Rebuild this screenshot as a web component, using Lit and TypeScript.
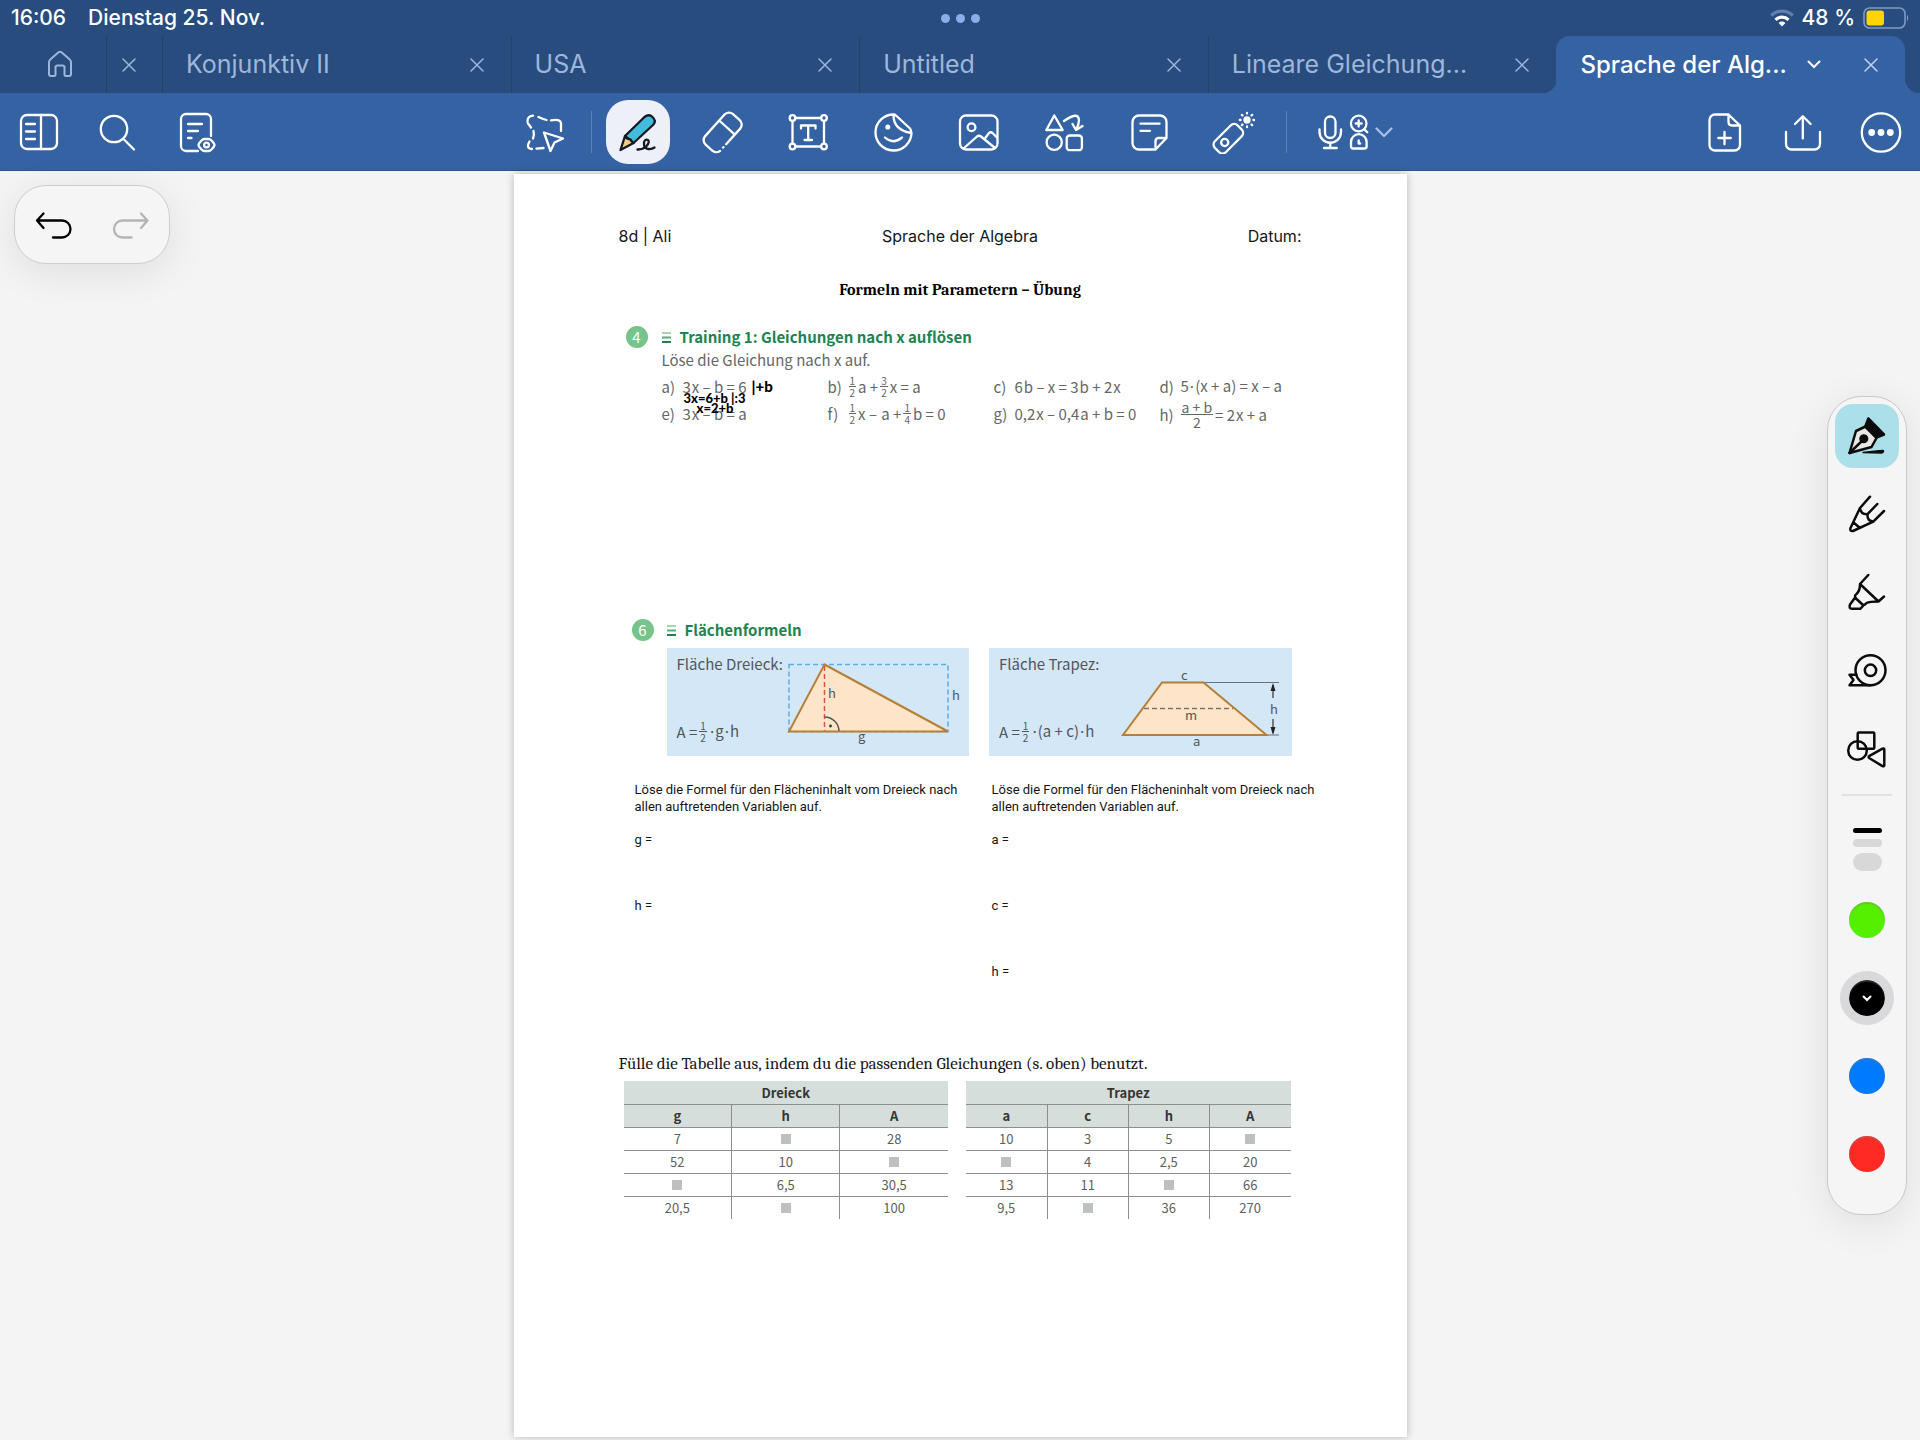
import { LitElement, html, css, svg, nothing } from "lit";
import { customElement, property } from "lit/decorators.js";
import { classMap } from "lit/directives/class-map.js";

const icons: Record<string, unknown> = {
  panel: svg`<rect x="4" y="5" width="36" height="34" rx="6"/><path d="M24 5v34M9 14h9M9 21.5h9M9 29h9"/>`,
  search: svg`<circle cx="19" cy="19" r="13.2"/><path d="M28.5 29 39 39.5"/>`,
  outline: svg`<path d="M25 41H13a5 5 0 0 1-5-5V9a5 5 0 0 1 5-5h20a5 5 0 0 1 5 5v17M15 14h14M15 21h10M15 28h3.5"/><path d="M28.5 30.500q1.500-1.500 3-1.500h4q1.500 0 3 1.500l2.500 3q1 1.500 0 3l-2.500 3q-1.500 1.500-3 1.500h-4q-1.500 0-3-1.500l-2.500-3q-1-1.500 0-3z"/><circle cx="33.500" cy="35" r="2.400"/>`,
  lasso: svg`<path d="M4.500 12Q4 6 10 5.600M15.500 7q4 2 8 3M28 10.300Q37 8.500 38 13v8M5 13.500l3 4M10.500 21q1 4-.5 7.500M6.500 31.500Q2.500 38.500 9 39M13.500 38.600l7-.6"/><path d="M21 22.500 40 28.500 31.500 32.500 27.500 41z"/>`,
  pen: svg`<g stroke="#15181d"><path d="M9 26 28.500 7q4.500-3.500 8 0 4 3.500 1 7.500L17.500 33z" fill="#42bcdc"/><path d="M9 26 4.500 40 17.500 33q-2-1-3-3.500Q10 29 9 26z" fill="#efcb8c"/><path fill="none" d="M21.500 39.500q5 .3 9-3.500 3.500-4 1.500-6-3-1.500-4 2.500-.5 6 4.500 6.500 3.500.3 6-1.500"/></g>`,
  eraser: svg`<g transform="rotate(-48 22 22)"><path d="M15 32.500H36a6 6 0 0 0 6-6V17.500a6 6 0 0 0-6-6H7a6 6 0 0 0-6 6V26.500a6 6 0 0 0 5 6M10.500 32.500h.5M28 11.500v21"/></g>`,
  text: svg`<circle cx="6.500" cy="8" r="2.800"/><circle cx="38" cy="8" r="2.800"/><circle cx="6.500" cy="36.500" r="2.800"/><circle cx="38" cy="36.500" r="2.800"/><path d="M9.500 8H35M9.500 36.500H35M6.500 11v22.500M38 11v22.500M22.200 15.500v14.500M18.500 30h7.500M15 18.500v-3h14.500v3"/>`,
  sticker: svg`<path d="M23 4.500A18 18 0 1 0 40.500 23q-1-4-1.500-4.500L25.500 6Q24 4.700 23 4.500zM22.500 4.500Q22 20 40.500 23M14 27.500q8 7.500 17 0"/><circle cx="16.800" cy="17" r="1.400" fill="currentColor"/>`,
  image: svg`<rect x="4" y="5.500" width="37.500" height="34" rx="6"/><circle cx="15.500" cy="17.300" r="3.900"/><path d="M7.500 38.500 21 26.500q2-1.500 4 0L39 38M28.500 29l4.500-6q1.500-1.500 3.500 0l4.500 4.500"/>`,
  elements: svg`<path d="M13.300 5.500 5.300 20h16.400z"/><circle cx="13.200" cy="32.300" r="7.600"/><rect x="25.700" y="25.500" width="15.200" height="14.700" rx="3"/><path d="M23 11Q37 1 38 10q0 4-2.500 9M31.500 14l3.500 6 6.500-4"/>`,
  note: svg`<path d="M29.500 39.500H13a6.500 6.500 0 0 1-6.500-6.500V12A6.500 6.500 0 0 1 13 5.500h21a6.500 6.500 0 0 1 6.500 6.500v16zM29.500 39.500V31a3 3 0 0 1 3-3h8M14.500 13.700h19M14.500 20.800h9.500"/>`,
  laser: svg`<rect x="1.300" y="21" width="32" height="15.500" rx="5" transform="rotate(-45 17.300 28.700)"/><circle cx="13.700" cy="32.500" r="3.600"/><circle cx="36" cy="10" r="2.500" fill="currentColor"/><path d="M36 2.800v.8M36 16.400v.8M28.800 10h.8M42.400 10h.8M30.900 4.900l.6.6M40.500 14.500l.6.600M30.900 15.100l.6-.6M40.500 5.500l.6-.6"/>`,
  addPage: svg`<path d="M25.500 4.500H12a5.500 5.500 0 0 0-5.500 5.500v25a5.500 5.500 0 0 0 5.500 5.500h19.500A5.500 5.500 0 0 0 37 35V15.500zM25.500 4.500V12q0 3.500 3.500 3.500h8M21.500 21.800v12.500M15.300 28h12.500"/>`,
  share: svg`<path d="M5 22v12a5.500 5.500 0 0 0 5.500 5.500h23A5.500 5.500 0 0 0 39 34V22M21.800 28.500V6.500M14 14l7.800-7.800L29.600 14"/>`,
  more: svg`<circle cx="22" cy="22.500" r="19.200"/><g fill="currentColor" stroke="none"><circle cx="12.700" cy="22.500" r="3.400"/><circle cx="22" cy="22.500" r="3.400"/><circle cx="31.300" cy="22.500" r="3.400"/></g>`,
  undo: svg`<path d="M11.500 10.500 5 17.500l6.500 7.500M5.500 17.500H30a8 8 0 0 1 0 17h-9"/>`,
  redo: svg`<path d="M32 10.500l6.500 7-6.500 7.500M38 17.500H13.500a8 8 0 0 0 0 17h9"/>`,
  nib: svg`<path d="M4.500 39 11 17l9.500-4.500L31.500 24l-5 9z" fill="#eae7e6"/><path d="M23.300 4.500 39 20.500l-7.500 3L20.300 12.500z" fill="currentColor"/><circle cx="18.800" cy="24.700" r="3.300" fill="currentColor"/><path d="M4.500 39 18 26"/><path d="M18 38.500l18.500-2q2-.5 2 1-.2 1.500-2 1.500z" fill="currentColor" stroke-width="1.500"/>`,
  pencil: svg`<path d="M25 4.700 15 16 5.500 36q-1 3.500 2.500 3L28.300 29.700 39 19M15 16q.5 6.500 7.500 6.200-.5 7.200 6 7.300M22.500 22.200 32.300 12M8.500 30.500l6.500 5.500"/>`,
  marker: svg`<path d="M23.300 5 15 14l18.500 17.500 5.500-5M15 14q0 7-3.500 10-3 2 0 5l6.500 6q2 0 3.500-2 3-1.500 12-1.500M9.800 28 5 34.500q-1.500 4.200 2 4.300h8.500l3-3.500"/>`,
  tape: svg`<circle cx="25.500" cy="22.300" r="15"/><circle cx="25.500" cy="22.300" r="5.700"/><path d="M25.500 37.300H4.500l4-5.300-4-5.300h7"/>`,
  shapes: svg`<rect x="12.700" y="6.500" width="16.600" height="16.300" rx="1"/><circle cx="12.500" cy="24.500" r="9.300"/><path d="M24.500 29.800 37.500 22.600q1.800-.6 1.800 1v15.500q0 1.800-1.800 1L24.500 32.200q-1.800-1.200 0-2.400z"/>`,
};

const icon = (name: string) =>
  html`<svg class="icon" viewBox="0 0 44 44" aria-hidden="true">${icons[name]}</svg>`;

const cross = html`<svg class="cross" viewBox="0 0 14 14" aria-hidden="true"><path d="M1 1l12 12M13 1 1 13" /></svg>`;

const iconBase = css`
  .icon {
    width: 44px;
    height: 44px;
    fill: none;
    stroke: currentColor;
    stroke-width: 2.3;
    stroke-linecap: round;
    stroke-linejoin: round;
  }
  button {
    appearance: none;
    border: 0;
    margin: 0;
    padding: 0;
    background: none;
    color: inherit;
    font: inherit;
    display: flex;
    align-items: center;
    justify-content: center;
  }
`;

@customElement("status-bar")
class StatusBar extends LitElement {
  static styles = css`
    :host {
      display: grid;
      grid-template-columns: 1fr auto 1fr;
      align-items: center;
      height: 36px;
      padding: 0 10px 0 11px;
      color: #fff;
      font: 500 21px/36px Inter, sans-serif;
    }
    .left {
      display: flex;
      gap: 22px;
    }
    .dots {
      display: flex;
      gap: 6px;
    }
    .dot {
      width: 9px;
      height: 9px;
      border-radius: 50%;
      background: #8aaeea;
    }
    .right {
      display: flex;
      justify-content: flex-end;
      align-items: center;
      gap: 8px;
    }
    .wifi {
      width: 24px;
      height: 18px;
    }
    .battery {
      width: 47px;
      height: 22px;
    }
  `;
  render() {
    return html`
      <div class="left"><span>16:06</span><span>Dienstag 25. Nov.</span></div>
      <div class="dots"><i class="dot"></i><i class="dot"></i><i class="dot"></i></div>
      <div class="right">
        <svg class="wifi" viewBox="0 0 24 18" fill="none" stroke-width="3.2">
          <path d="M1.200 6.500a15.500 15.500 0 0 1 21.600 0" stroke="#5f7fae" />
          <path d="M5.500 10.800a9.300 9.300 0 0 1 13 0" stroke="#fff" />
          <path d="M12 17.500 8.600 14a4.800 4.800 0 0 1 6.800 0z" fill="#fff" />
        </svg>
        <span>48 %</span>
        <svg class="battery" viewBox="0 0 47 22" fill="none">
          <rect x="1" y="1" width="41" height="20" rx="5.500" stroke="#7f9ac3" stroke-width="1.600" />
          <rect x="3.500" y="3.500" width="17.500" height="15" rx="3" fill="#ffd400" />
          <path d="M44 7.500q2.500 3.500 0 7z" fill="#7f9ac3" />
        </svg>
      </div>
    `;
  }
}

@customElement("tab-bar")
class TabBar extends LitElement {
  static styles = [
    iconBase,
    css`
      :host {
        display: flex;
        height: 57px;
        padding-right: 15px;
        color: #9fb6dc;
        font: 400 25px/57px Inter, sans-serif;
      }
      .home {
        width: 106px;
        padding-left: 14px;
        box-sizing: border-box;
      }
      .house {
        width: 26px;
        height: 32px;
      }
      .stub {
        width: 56px;
        border-left: 1px solid #21426f;
        box-sizing: border-box;
        padding-right: 12px;
      }
      .tab {
        position: relative;
        display: flex;
        flex: 1;
        min-width: 0;
        align-items: center;
        padding: 0 23px;
        border-left: 1px solid #21426f;
        box-sizing: border-box;
      }
      .name {
        flex: 1;
        min-width: 0;
        justify-content: flex-start;
        white-space: nowrap;
      }
      .close {
        width: 22px;
        height: 32px;
      }
      .cross {
        width: 14px;
        height: 14px;
        stroke: currentColor;
        stroke-width: 1.500;
        stroke-linecap: round;
      }
      .active {
        background: #3562a3;
        color: #fff;
        border-color: #3562a3;
        border-radius: 14px 14px 0 0;
        font-size: 24px;
        font-weight: 500;
      }
      .active .close {
        color: #c3d3ee;
      }
      .active::before,
      .active::after {
        content: "";
        position: absolute;
        bottom: 0;
        width: 14px;
        height: 14px;
      }
      .active::before {
        right: 100%;
        background: radial-gradient(circle at 0 0, transparent 14px, #3562a3 14px);
      }
      .active::after {
        left: 100%;
        background: radial-gradient(circle at 100% 0, transparent 14px, #3562a3 14px);
      }
      .chevron {
        width: 14px;
        margin-right: 39px;
      }
      .arrow {
        width: 14px;
        height: 9px;
        fill: none;
        stroke: currentColor;
        stroke-width: 2;
        stroke-linecap: round;
      }
    `,
  ];
  tabs = ["Konjunktiv II", "USA", "Untitled", "Lineare Gleichung...", "Sprache der Alg..."];
  render() {
    return html`
      <button class="home" aria-label="Start">
        <svg class="house" viewBox="0 0 26 32" fill="none" stroke="currentColor" stroke-width="2" stroke-linejoin="round">
          <path d="M2 13.500q0-2 1.500-3.200l8-7q1.500-1.200 3 0l8 7Q24 11.500 24 13.500V25q0 2-2 2h-3q-1.500 0-1.500-1.500V18.500q0-2-2-2h-5q-2 0-2 2v7Q8.500 27 7 27H4q-2 0-2-2z" />
        </svg>
      </button>
      <button class="stub" aria-label="Tab schließen">${cross}</button>
      ${this.tabs.map((name, i) => {
        const active = i === this.tabs.length - 1;
        return html`<div class=${classMap({ tab: true, active })}>
          <button class="name">${name}</button>
          ${active
            ? html`<button class="chevron" aria-label="Menü"><svg class="arrow" viewBox="0 0 14 9"><path d="M1.500 1.500 7 7l5.500-5.500" /></svg></button>`
            : nothing}
          <button class="close" aria-label="Tab schließen">${cross}</button>
        </div>`;
      })}
    `;
  }
}

@customElement("tool-bar")
class ToolBar extends LitElement {
  static styles = [
    iconBase,
    css`
      :host {
        display: grid;
        grid-template-columns: 1fr auto 1fr;
        align-items: center;
        height: 77px;
        padding: 0 7px;
        background: #3562a3;
        border-bottom: 1px solid #2c5490;
        color: #fff;
      }
      .group {
        display: flex;
        align-items: center;
        gap: 14px;
      }
      .end {
        justify-content: flex-end;
      }
      .tools {
        gap: 21px;
      }
      .tool {
        width: 64px;
        height: 64px;
        border-radius: 22px;
      }
      .selected {
        background: #edf0f9;
      }
      .rule {
        width: 1px;
        height: 42px;
        background: #5b80b8;
      }
      .lead {
        display: flex;
        align-items: center;
        gap: 14px;
      }
      .extra {
        height: 64px;
        gap: 6px;
        padding: 0 14px 0 10px;
      }
      .mic,
      .aids,
      .arrow {
        height: 36px;
        fill: none;
        stroke: currentColor;
        stroke-width: 2.300;
        stroke-linecap: round;
        stroke-linejoin: round;
      }
      .mic {
        width: 25px;
      }
      .aids {
        width: 20px;
      }
      .arrow {
        width: 18px;
        stroke: #a9bfe2;
      }
    `,
  ];
  private tool(name: string, label: string, selected = false) {
    return html`<button class=${classMap({ tool: true, selected })} aria-label=${label}>${icon(name)}</button>`;
  }
  render() {
    return html`
      <div class="group">
        ${this.tool("panel", "Seitenleiste")} ${this.tool("search", "Suchen")} ${this.tool("outline", "Lesemodus")}
      </div>
      <div class="group tools">
        <div class="lead">
          ${this.tool("lasso", "Lasso")}<span class="rule"></span>${this.tool("pen", "Stift", true)}
        </div>
        ${this.tool("eraser", "Radierer")} ${this.tool("text", "Text")} ${this.tool("sticker", "Sticker")}
        ${this.tool("image", "Bild")} ${this.tool("elements", "Elemente")} ${this.tool("note", "Notiz")}
        ${this.tool("laser", "Laserpointer")}
        <span class="rule"></span>
        <button class="extra" aria-label="Aufnahme und Hilfen">
          <svg class="mic" viewBox="0 0 25 36"><rect x="7" y="2.500" width="10.500" height="21.500" rx="5.200" /><path d="M1.500 15.500v2.500a10.700 10.700 0 0 0 21.500 0v-2.500M12.300 29v4.500M6 34h12.800" /></svg>
          <svg class="aids" viewBox="0 0 20 36"><circle cx="9.700" cy="9.500" r="7.800" /><path d="M15.300 15.200l3 3M9.700 6.500v6M6.700 9.500h6M4 34.500q-2 0-2-2V28a7.800 7.800 0 0 1 15.600 0v4.500q0 2-2 2zM9.700 26.500v3h1.500" /></svg>
          <svg class="arrow" viewBox="0 0 18 36"><path d="M1.500 14.500 9 22l7.500-7.500" /></svg>
        </button>
      </div>
      <div class="group end">
        ${this.tool("addPage", "Seite hinzufügen")} ${this.tool("share", "Teilen")} ${this.tool("more", "Mehr")}
      </div>
    `;
  }
}

@customElement("pen-palette")
class PenPalette extends LitElement {
  static styles = [
    iconBase,
    css`
      :host {
        display: flex;
        flex-direction: column;
        align-items: center;
        gap: 14px;
        padding: 7px 7px 28px;
        border: 1px solid #cbc8c6;
        border-radius: 34px;
        background: #f5f5f5;
        box-shadow: 0 8px 40px rgba(0, 0, 0, 0.09);
        color: #0c0c0c;
      }
      .item {
        width: 64px;
        height: 64px;
        border-radius: 18px;
      }
      .icon {
        stroke-width: 2.500;
      }
      .selected {
        background: #abdfea;
      }
      .rule {
        width: 50px;
        height: 2px;
        background: #e2e2e2;
      }
      .widths {
        flex-direction: column;
        justify-content: flex-end;
        gap: 6px;
        padding-bottom: 3px;
      }
      .line {
        width: 29px;
        border-radius: 9px;
        background: #d8d8d8;
      }
      .thin {
        height: 5px;
        background: #000;
      }
      .medium {
        height: 8px;
      }
      .thick {
        height: 18px;
      }
      .color {
        display: flex;
        align-items: center;
        justify-content: center;
        width: 36px;
        height: 36px;
        border-radius: 50%;
        box-shadow: inset 0 2px 1px rgba(120, 120, 120, 0.35);
      }
      .green {
        background: #55f000;
      }
      .black {
        background: #000;
        outline: 9px solid #d9d9db;
      }
      .blue {
        background: #007aff;
      }
      .red {
        background: #ff2a23;
      }
      .arrow {
        width: 10px;
        height: 7px;
        fill: none;
        stroke: #fff;
        stroke-width: 2;
        stroke-linecap: round;
      }
    `,
  ];
  render() {
    const pens: [string, string][] = [
      ["nib", "Füller"],
      ["pencil", "Bleistift"],
      ["marker", "Textmarker"],
      ["tape", "Klebeband"],
      ["shapes", "Formen"],
    ];
    const colors: [string, string][] = [
      ["green", "Grün"],
      ["black", "Schwarz"],
      ["blue", "Blau"],
      ["red", "Rot"],
    ];
    return html`
      ${pens.map(
        ([name, label], i) =>
          html`<button class=${classMap({ item: true, selected: i === 0 })} aria-label=${label}>${icon(name)}</button>`,
      )}
      <span class="rule"></span>
      <button class="item widths" aria-label="Strichstärke">
        <span class="line thin"></span><span class="line medium"></span><span class="line thick"></span>
      </button>
      ${colors.map(
        ([name, label]) => html`<button class="item" aria-label=${label}>
          <span class=${classMap({ color: true, [name]: true })}>
            ${name === "black"
              ? html`<svg class="arrow" viewBox="0 0 10 7"><path d="M1.500 1.500 5 5l3.500-3.500" /></svg>`
              : nothing}
          </span>
        </button>`,
      )}
    `;
  }
}

@customElement("data-table")
class DataTable extends LitElement {
  @property() heading = "";
  @property({ attribute: false }) columns: string[] = [];
  @property({ attribute: false }) rows: string[][] = [];
  static styles = css`
    :host {
      display: block;
    }
    table {
      width: 100%;
      table-layout: fixed;
      border-collapse: collapse;
      color: #5c5f5e;
      font: 400 13px/22px "Noto Sans CJK SC", sans-serif;
      text-align: center;
    }
    th,
    td {
      height: 22px;
      padding: 0;
      border-left: 1px solid #8b908e;
      border-top: 1px solid #8b908e;
    }
    th {
      background: #d6dedb;
      color: #333635;
      font-weight: 700;
    }
    .title {
      border-top-color: #d6dedb;
    }
    tr > :first-child {
      border-left: 0;
    }
    .gap {
      display: inline-block;
      width: 10px;
      height: 10px;
      background: #bcc1bf;
    }
  `;
  render() {
    return html`<table>
      <thead>
        <tr><th class="title" colspan=${this.columns.length}>${this.heading}</th></tr>
        <tr>${this.columns.map((c) => html`<th>${c}</th>`)}</tr>
      </thead>
      <tbody>
        ${this.rows.map((r) => html`<tr>${r.map((v) => html`<td>${v || html`<span class="gap"></span>`}</td>`)}</tr>`)}
      </tbody>
    </table>`;
  }
}

const frac = (top: string, bottom: string, wide = false) =>
  html`<span class=${classMap({ frac: true, wide })}><span class="over">${top}</span><span>${bottom}</span></span>`;

// Multiplication dot, set in a family whose dot is narrow.
const dot = html`<span class="dot">·</span>`;

const levels = html`<svg class="levels" viewBox="0 0 9 11" aria-hidden="true"><path d="M0 1h9" stroke="#a5d5b3" /><path d="M0 5.500h9" stroke="#5bab7b" /><path d="M0 10h9" stroke="#1c8450" /></svg>`;

@customElement("work-sheet")
class WorkSheet extends LitElement {
  static styles = css`
    :host {
      display: block;
      box-sizing: border-box;
      aspect-ratio: 210 / 297;
      padding-top: 50px;
      background: #fff;
      box-shadow: 0 0 8px rgba(0, 0, 0, 0.25);
      color: #161616;
      font: 400 15px/24px "Noto Sans CJK SC", sans-serif;
    }
    h1,
    h2,
    p,
    ol {
      margin: 0;
      padding: 0;
      list-style: none;
    }
    .head {
      display: grid;
      grid-template-columns: 1fr auto 1fr;
      padding: 0 105px;
      font: 400 16px/24px Inter, sans-serif;
    }
    .date {
      text-align: right;
    }
    .title {
      margin-top: 30px;
      text-align: center;
      font: 700 16px/24px Cambria, Caladea, serif;
      color: #000;
    }
    .task {
      display: grid;
      grid-template-columns: 22px minmax(0, 1fr);
      column-gap: 14px;
      margin-top: 22px;
      padding: 0 81px 0 112px;
    }
    .areas {
      margin-top: 190px;
      padding: 0 115px 0 118px;
      column-gap: 13px;
    }
    .badge {
      width: 22px;
      height: 22px;
      margin-top: 2px;
      border-radius: 50%;
      background: #76c48a;
      color: #fff;
      line-height: 21px;
      text-align: center;
    }
    .topic {
      display: flex;
      align-items: center;
      gap: 9px;
      color: #1c8450;
      font-size: 15px;
      line-height: 25px;
      font-weight: 700;
    }
    .levels {
      width: 9px;
      height: 11px;
      margin-top: 2px;
      stroke-width: 2;
    }
    .ask {
      margin-bottom: 2px;
      line-height: 22px;
      color: #666;
    }
    .sums {
      position: relative;
      display: grid;
      grid-template-columns: repeat(4, 1fr);
      grid-auto-rows: 27px;
      color: #666;
    }
    .sum {
      display: grid;
      grid-template-columns: 21px 1fr;
      align-items: center;
      white-space: nowrap;
    }
    .math {
      display: flex;
      align-items: center;
      gap: 2px;
    }
    .dot {
      padding: 0 1px;
      font-family: Inter, sans-serif;
    }
    .frac {
      display: inline-flex;
      flex-direction: column;
      align-items: center;
      font-size: 10px;
      line-height: 11px;
    }
    .over {
      border-bottom: 1px solid currentColor;
      padding: 0 1px;
    }
    .wide {
      font-size: 14px;
      line-height: 14px;
    }
    .ink {
      position: absolute;
      color: #000;
      font: 900 13px/12px Lato, "Noto Sans", sans-serif;
      white-space: nowrap;
    }
    .ink1 {
      left: 90px;
      top: 7px;
      font-size: 15px;
    }
    .ink2 {
      left: 22px;
      top: 19px;
    }
    .ink3 {
      left: 35px;
      top: 29px;
    }
    .cards {
      display: grid;
      grid-column: 2;
      grid-template-columns: repeat(2, minmax(0, 1fr));
      gap: 20px;
      margin-top: 6px;
    }
    .card {
      display: flex;
      height: 108px;
      background: #d4e7f7;
      color: #50565c;
      white-space: nowrap;
    }
    .facts {
      display: flex;
      flex: 1;
      min-width: 0;
      flex-direction: column;
      justify-content: space-between;
      padding: 4px 0 12px 10px;
      box-sizing: border-box;
    }
    .figure {
      height: 108px;
      flex: none;
      fill: none;
      stroke-width: 1.500;
    }
    .triangle {
      width: 190px;
    }
    .trapezoid {
      width: 177px;
    }
    .figure text {
      fill: #50565c;
      font-size: 13px;
    }
    .answers {
      display: grid;
      grid-template-columns: 1fr 1fr;
      column-gap: 12px;
      margin-top: 25px;
      padding: 0 70px 0 121px;
      font: 400 13px/17px Roboto, sans-serif;
    }
    .blanks {
      display: flex;
      flex-direction: column;
      gap: 48px;
      margin-top: 16px;
      line-height: 18px;
    }
    .fill {
      margin-top: 71px;
      padding: 0 105px;
      font: 400 17px/24px Cambria, Caladea, serif;
    }
    .tables {
      display: grid;
      grid-template-columns: 1fr 1fr;
      gap: 18px;
      margin-top: 5px;
      padding: 0 116px 0 110px;
    }
  `;
  render() {
    const sums: [string, unknown][] = [
      ["a)", "3\u200Ax – b = 6"],
      ["b)", html`${frac("1", "2")}<span>a +</span>${frac("3", "2")}<span>x = a</span>`],
      ["c)", "6\u200Ab – x = 3\u200Ab + 2\u200Ax"],
      ["d)", html`<span>5${dot}(x + a) = x – a</span>`],
      ["e)", "3\u200Ax – b = a"],
      ["f)", html`${frac("1", "2")}<span>x – \u200Aa +</span>${frac("1", "4")}<span>b = 0</span>`],
      ["g)", "0,2\u200Ax – 0,4\u200Aa + b = 0"],
      ["h)", html`${frac("a + b", "2", true)}<span>= 2\u200Ax + a</span>`],
    ];
    return html`
      <div class="head"><span>8d | Ali</span><span>Sprache der Algebra</span><span class="date">Datum:</span></div>
      <h1 class="title">Formeln mit Parametern – Übung</h1>

      <section class="task">
        <span class="badge">4</span>
        <div>
          <h2 class="topic">${levels}<span>Training 1: Gleichungen nach x auflösen</span></h2>
          <p class="ask">Löse die Gleichung nach x auf.</p>
          <ol class="sums">
            ${sums.map(([k, v]) => html`<li class="sum"><span>${k}</span><span class="math">${v}</span></li>`)}
            <li class="ink ink1">|+b</li>
            <li class="ink ink2">3x=6+b |:3</li>
            <li class="ink ink3">x=2+b</li>
          </ol>
        </div>
      </section>

      <section class="task areas">
        <span class="badge">6</span>
        <h2 class="topic">${levels}<span>Flächenformeln</span></h2>
        <div class="cards">
          <div class="card">
            <div class="facts">
              <span>Fläche Dreieck:</span>
              <span class="math"><span>A =</span>${frac("1", "2")}<span>${dot}g${dot}h</span></span>
            </div>
            <svg class="figure triangle" viewBox="0 0 190 108">
              <rect x="10" y="16.500" width="159" height="67" stroke="#5aaedf" stroke-dasharray="5 3" />
              <path d="M45.500 16.500 169 83.500H10z" fill="#fee5c9" stroke="#b57f35" stroke-width="2" />
              <path d="M45.500 18v65" stroke="#e2504e" stroke-dasharray="5 3" />
              <path d="M45.500 69a14.500 14.500 0 0 1 14.500 14" stroke="#50565c" />
              <circle cx="51.500" cy="78" r="1.400" fill="#333" />
              <text x="49" y="50">h</text><text x="173" y="52">h</text><text x="79" y="93">g</text>
            </svg>
          </div>
          <div class="card">
            <div class="facts">
              <span>Fläche Trapez:</span>
              <span class="math"><span>A =</span>${frac("1", "2")}<span>${dot}(a + c)${dot}h</span></span>
            </div>
            <svg class="figure trapezoid" viewBox="0 0 177 108">
              <path d="M88 34.500h76M150 87h14" stroke="#6b737a" stroke-width="1.200" />
              <path d="M47 34.500h41.500L151.500 87H8z" fill="#fee5c9" stroke="#b57f35" stroke-width="2" />
              <path d="M29 60.500h89" stroke="#7d7468" stroke-dasharray="5 3" />
              <path d="M158 37v13M158 71v14" stroke="#50565c" />
              <path d="M158 35l2.500 8h-5zM158 87l2.500-8h-5z" fill="#222" />
              <text x="66" y="32">c</text><text x="70" y="72">m</text><text x="78" y="98">a</text><text x="155" y="66">h</text>
            </svg>
          </div>
        </div>
      </section>

      <section class="answers">
        <div>
          <p>Löse die Formel für den Flächeninhalt vom Dreieck nach allen auftretenden Variablen auf.</p>
          <div class="blanks"><span>g =</span><span>h =</span></div>
        </div>
        <div>
          <p>Löse die Formel für den Flächeninhalt vom Dreieck nach allen auftretenden Variablen auf.</p>
          <div class="blanks"><span>a =</span><span>c =</span><span>h =</span></div>
        </div>
      </section>

      <p class="fill">Fülle die Tabelle aus, indem du die passenden Gleichungen (s. oben) benutzt.</p>
      <div class="tables">
        <data-table
          heading="Dreieck"
          .columns=${["g", "h", "A"]}
          .rows=${[["7", "", "28"], ["52", "10", ""], ["", "6,5", "30,5"], ["20,5", "", "100"]]}
        ></data-table>
        <data-table
          heading="Trapez"
          .columns=${["a", "c", "h", "A"]}
          .rows=${[["10", "3", "5", ""], ["", "4", "2,5", "20"], ["13", "11", "", "66"], ["9,5", "", "36", "270"]]}
        ></data-table>
      </div>
    `;
  }
}

@customElement("app-root")
class AppRoot extends LitElement {
  static styles = [
    iconBase,
    css`
      :host {
        display: flex;
        flex-direction: column;
        min-height: 100vh;
        background: #f4f4f4;
      }
      .top {
        background: #274c7d;
      }
      .desk {
        display: grid;
        grid-template-columns: minmax(180px, 1fr) minmax(0, 893px) minmax(100px, 1fr);
        flex: 1;
      }
      .sheet {
        align-self: start;
        margin: 3px 0 1px;
      }
      .history {
        display: flex;
        justify-self: start;
        align-self: start;
        margin: 14px 0 0 14px;
        border: 1px solid #cfcdcc;
        border-radius: 32px;
        background: #f5f5f5;
        box-shadow: 0 8px 40px rgba(0, 0, 0, 0.09);
        color: #000;
      }
      .step {
        width: 77px;
        height: 77px;
      }
      .step:disabled {
        color: #b4b4b4;
      }
      .palette {
        justify-self: end;
        align-self: center;
        margin-right: 13px;
      }
    `,
  ];
  render() {
    return html`
      <header class="top">
        <status-bar></status-bar>
        <tab-bar></tab-bar>
        <tool-bar></tool-bar>
      </header>
      <main class="desk">
        <div class="history">
          <button class="step" aria-label="Rückgängig">${icon("undo")}</button>
          <button class="step" aria-label="Wiederholen" disabled>${icon("redo")}</button>
        </div>
        <work-sheet class="sheet"></work-sheet>
        <pen-palette class="palette"></pen-palette>
      </main>
    `;
  }
}
